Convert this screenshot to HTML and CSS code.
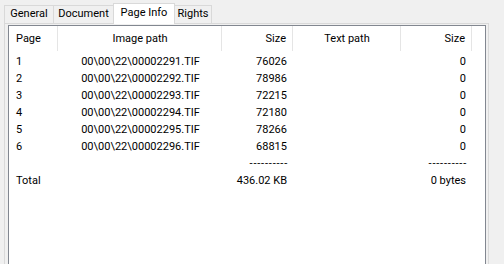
FILE: index.html
```html
<!DOCTYPE html>
<html>
	<head>
		<meta charset="utf-8" />
		<title>Page Info</title>
		<link rel="stylesheet" href="styles.css">
	</head>
	<body>
		<div class="dialog">
			<ul class="tabs">
				<li class="tab tab-general">General</li>
				<li class="tab tab-document">Document</li>
				<li class="tab tab-pageinfo active">Page Info</li>
				<li class="tab tab-rights">Rights</li>
			</ul>
			<div class="panel">
				<div class="listview">
					<div class="header">
						<div class="hcell">Page</div>
						<div class="hcell center">Image path</div>
						<div class="hcell right">Size</div>
						<div class="hcell center">Text path</div>
						<div class="hcell right">Size</div>
						<div class="hcell last"></div>
					</div>
					<div class="row">
						<div class="cell">1</div>
						<div class="cell center">00\00\22\00002291.TIF</div>
						<div class="cell right">76026</div>
						<div class="cell"></div>
						<div class="cell right">0</div>
					</div>
					<div class="row">
						<div class="cell">2</div>
						<div class="cell center">00\00\22\00002292.TIF</div>
						<div class="cell right">78986</div>
						<div class="cell"></div>
						<div class="cell right">0</div>
					</div>
					<div class="row">
						<div class="cell">3</div>
						<div class="cell center">00\00\22\00002293.TIF</div>
						<div class="cell right">72215</div>
						<div class="cell"></div>
						<div class="cell right">0</div>
					</div>
					<div class="row">
						<div class="cell">4</div>
						<div class="cell center">00\00\22\00002294.TIF</div>
						<div class="cell right">72180</div>
						<div class="cell"></div>
						<div class="cell right">0</div>
					</div>
					<div class="row">
						<div class="cell">5</div>
						<div class="cell center">00\00\22\00002295.TIF</div>
						<div class="cell right">78266</div>
						<div class="cell"></div>
						<div class="cell right">0</div>
					</div>
					<div class="row">
						<div class="cell">6</div>
						<div class="cell center">00\00\22\00002296.TIF</div>
						<div class="cell right">68815</div>
						<div class="cell"></div>
						<div class="cell right">0</div>
					</div>
					<div class="row">
						<div class="cell"></div>
						<div class="cell"></div>
						<div class="cell right dashes">----------</div>
						<div class="cell"></div>
						<div class="cell right dashes">----------</div>
					</div>
					<div class="row">
						<div class="cell">Total</div>
						<div class="cell"></div>
						<div class="cell right">436.02 KB</div>
						<div class="cell"></div>
						<div class="cell right">0 bytes</div>
					</div>
				</div>
			</div>
		</div>
	</body>
</html>
```
FILE: styles.css
```css
html, body{
	margin: 0;
	height: 100%;
	overflow: hidden;
}
body{
	background-color: #f0f0f0;
	font-family: Roboto, "Liberation Sans", sans-serif;
	font-size: 11px;
	color: #000;
}
.dialog{
	padding: 3px 0 0 4px;
	width: 485px;
}
/* 选项卡 */
.tabs{
	list-style: none;
	margin: 0;
	padding: 0;
	height: 20px;
	display: flex;
	align-items: flex-end;
}
.tab{
	box-sizing: border-box;
	height: 18px;
	line-height: 16px;
	text-align: center;
	border: 1px solid #d9d9d9;
	border-bottom: none;
	background-color: #f0f0f0;
	margin-left: -1px;
}
.tab:first-child{
	margin-left: 0;
}
.tab-general{ width: 50px; }
.tab-document{ width: 61px; }
.tab-pageinfo{ width: 62px; }
.tab-rights{ width: 38px; }
.tab.active{
	height: 21px;
	line-height: 17px;
	background-color: #fff;
	margin-bottom: -1px;
	position: relative;
	z-index: 1;
}
/* 面板一直延伸到窗口底部 */
.panel{
	border: 1px solid #d9d9d9;
	border-bottom: none;
	background-color: #f0f0f0;
	height: 240px;
}
/* 列表 */
.listview{
	box-sizing: border-box;
	margin: 1px 0 0 3px;
	width: 478px;
	height: 239px;
	border: 1px solid #828790;
	border-bottom: none;
	background-color: #fff;
}
.header, .row{
	display: grid;
	grid-template-columns: 49px 164px 71px 108px 71px 1fr;
}
.header{
	height: 27px;
}
.hcell{
	box-sizing: border-box;
	border-right: 1px solid #e5e5e5;
	padding: 0 6px 0 7px;
	line-height: 26px;
	height: 25px;
	white-space: nowrap;
}
.hcell.last{
	border-right: none;
}
.row{
	height: 17px;
	line-height: 17px;
}
.cell{
	padding: 0 6px 0 7px;
	white-space: nowrap;
}
.center{
	text-align: center;
}
.right{
	text-align: right;
}
.dashes{
	letter-spacing: 0.8px;
	padding-right: 5px;
}
```
